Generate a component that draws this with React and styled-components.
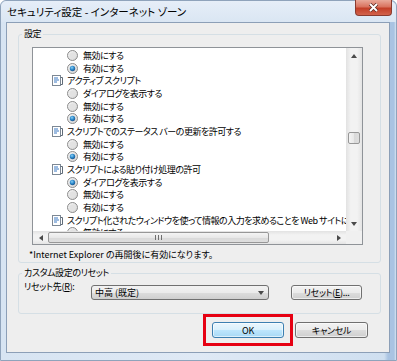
import React from "react";
import styled, { createGlobalStyle } from "styled-components";

const GlobalStyle = createGlobalStyle`
  body {
    margin: 0;
    background: #fff;
    font-family: "Noto Sans CJK JP", "Noto Sans", sans-serif;
    font-feature-settings: "palt";
    color: #000;
  }
`;

const rows = [
  { type: "radio", label: "無効にする" },
  { type: "radio", label: "有効にする", checked: true },
  { type: "cat", label: "アクティブ スクリプト" },
  { type: "radio", label: "ダイアログを表示する" },
  { type: "radio", label: "無効にする" },
  { type: "radio", label: "有効にする", checked: true },
  { type: "cat", label: "スクリプトでのステータス バーの更新を許可する" },
  { type: "radio", label: "無効にする" },
  { type: "radio", label: "有効にする", checked: true },
  { type: "cat", label: "スクリプトによる貼り付け処理の許可" },
  { type: "radio", label: "ダイアログを表示する", checked: true },
  { type: "radio", label: "無効にする" },
  { type: "radio", label: "有効にする" },
  {
    type: "cat",
    label:
      "スクリプト化されたウィンドウを使って情報の入力を求めることを Web サイトに許可する",
  },
  { type: "radio", label: "無効にする" },
];

const Radio = ({ checked }) => (
  <svg width="11" height="11" viewBox="0 0 11 11">
    <defs>
      <linearGradient id="rb" x1="0" y1="0" x2="1" y2="1">
        <stop offset="0" stopColor="#f6f6f6" />
        <stop offset="1" stopColor="#d4d4d4" />
      </linearGradient>
      <radialGradient id="rdot" cx="0.4" cy="0.35" r="0.7">
        <stop offset="0" stopColor="#8fd0f5" />
        <stop offset="0.5" stopColor="#2f8ccd" />
        <stop offset="1" stopColor="#1a4f86" />
      </radialGradient>
    </defs>
    <circle cx="5.5" cy="5.5" r="5" fill="url(#rb)" stroke="#8c8c8c" />
    {checked ? (
      <circle cx="5.5" cy="5.5" r="2.7" fill="url(#rdot)" />
    ) : (
      <circle cx="5.5" cy="5.5" r="3" fill="#e2e2e2" />
    )}
  </svg>
);

const ScriptIcon = () => (
  <svg width="11" height="11" viewBox="0 0 11 11">
    <rect x="0.5" y="0.5" width="8" height="10" fill="#fff" stroke="#7d8894" />
    <path d="M2 3h4M2 5h5M2 7h3" stroke="#3a79c2" strokeWidth="1" />
    <path d="M8.5 2.5h2v7h-2" fill="none" stroke="#5f6b78" />
  </svg>
);

const Arrow = ({ dir }) => {
  const d = {
    up: "M0 4L3 0L6 4Z",
    down: "M0 0L6 0L3 4Z",
    left: "M4 0L4 6L0 3Z",
    right: "M0 0L4 3L0 6Z",
  }[dir];
  const horiz = dir === "left" || dir === "right";
  return (
    <svg width={horiz ? 4 : 6} height={horiz ? 6 : 4} viewBox={horiz ? "0 0 4 6" : "0 0 6 4"}>
      <path d={d} fill="#4a4a4a" />
    </svg>
  );
};

const App = () => (
  <>
    <GlobalStyle />
    <Window>
      <TitleBar>
        <Title>セキュリティ設定 - インターネット ゾーン</Title>
        <CloseButton>
          <svg width="13" height="9" viewBox="0 0 13 9">
            <path d="M3 1L10 8M10 1L3 8" stroke="#5a2a22" strokeWidth="3.4" />
            <path d="M3 1L10 8M10 1L3 8" stroke="#fff" strokeWidth="1.9" />
          </svg>
        </CloseButton>
      </TitleBar>
      <Client>
        <GroupBox>
          <Caption>設定</Caption>
          <ListBox>
            <ListContent>
              {rows.map((r, i) =>
                r.type === "radio" ? (
                  <Row key={i} $indent={34}>
                    <Radio checked={r.checked} />
                    <span>{r.label}</span>
                  </Row>
                ) : (
                  <Row key={i} $indent={19} $gap={4}>
                    <ScriptIcon />
                    <span>{r.label}</span>
                  </Row>
                )
              )}
            </ListContent>
            <VScroll>
              <ArrowBox $h={15}>
                <Arrow dir="up" />
              </ArrowBox>
              <VTrack>
                <Thumb $vertical style={{ marginTop: 69 }} />
              </VTrack>
              <ArrowBox $h={15}>
                <Arrow dir="down" />
              </ArrowBox>
            </VScroll>
            <HScroll>
              <ArrowBox $w={15}>
                <Arrow dir="left" />
              </ArrowBox>
              <Thumb style={{ width: 221 }}>
                <svg width="7" height="5" viewBox="0 0 7 5">
                  <path d="M0.5 0v5M3.5 0v5M6.5 0v5" stroke="#6e6e6e" />
                </svg>
              </Thumb>
              <HTrack />
              <ArrowBox $w={15}>
                <Arrow dir="right" />
              </ArrowBox>
            </HScroll>
            <Corner />
          </ListBox>
          <Note>*Internet Explorer の再開後に有効になります。</Note>
        </GroupBox>
        <ResetGroup>
          <Caption>カスタム設定のリセット</Caption>
          <ResetRow>
            <FieldLabel>
              リセット先(<u>R</u>):
            </FieldLabel>
            <Combo>
              <span>中高 (既定)</span>
              <Arrow dir="down" />
            </Combo>
            <Button $w={71} $ml={22} $inRow>
              リセット(<u>E</u>)...
            </Button>
          </ResetRow>
        </ResetGroup>
        <ButtonBar>
          <Highlight>
            <Button $w={72} $primary>
              OK
            </Button>
          </Highlight>
          <Button $w={73} $ml={2}>
            キャンセル
          </Button>
        </ButtonBar>
      </Client>
    </Window>
  </>
);

const Window = styled.div`
  box-sizing: border-box;
  width: 397px;
  height: 361px;
  display: flex;
  flex-direction: column;
  border: 1px solid #8fa3bb;
  border-radius: 6px 6px 0 0;
  background: linear-gradient(90deg, #d7e4f2 0%, #dfe9f5 50%, #cfdff0 97%, #a9c3e2 98%, #a9c3e2 99.5%, #d7e4f2 100%);
`;

const TitleBar = styled.div`
  height: 21px;
  display: flex;
  align-items: flex-start;
  background: linear-gradient(180deg, #e6eef8 0%, #dae6f3 100%);
  border-radius: 6px 6px 0 0;
`;

const Title = styled.div`
  padding-left: 6px;
  font-size: 10.5px;
  line-height: 21px;
  white-space: nowrap;
`;

const CloseButton = styled.div`
  box-sizing: border-box;
  margin: -1px 4px 0 auto;
  width: 37px;
  height: 16px;
  display: flex;
  align-items: center;
  justify-content: center;
  border: 1px solid #8a3b2f;
  border-top: none;
  border-radius: 0 0 4px 4px;
  background: linear-gradient(180deg, #e9a99a 0%, #d9735f 45%, #c33f28 55%, #d2634c 100%);
`;

const Client = styled.div`
  flex: 1;
  margin: 0 6px 7px 5px;
  padding: 5px 8px 0 11px;
  border: 1px solid #8c9fb7;
  background: #eeeeee;
  display: flex;
  flex-direction: column;
`;

const GroupBox = styled.fieldset`
  margin: 0;
  min-width: 0;
  padding: 7px 0 1px 5px;
  border: 1px solid #d5dfe5;
  border-radius: 3px;
`;

const ResetGroup = styled(GroupBox)`
  margin-top: 4px;
  padding: 2px 0 13px 5px;
`;

const Caption = styled.legend`
  padding: 0 2px;
  margin-left: -2px;
  font-size: 9px;
  line-height: 12px;
  letter-spacing: -0.4px;
  white-space: nowrap;
`;

const ListBox = styled.div`
  box-sizing: border-box;
  width: 331px;
  height: 198px;
  margin-left: 8px;
  border: 1px solid #8f9398;
  background: #fff;
  display: grid;
  grid-template-columns: 1fr 16px;
  grid-template-rows: 1fr 13px;
  overflow: hidden;
`;

const ListContent = styled.div`
  overflow: hidden;
  padding-top: 1px;
`;

const Row = styled.div`
  height: 12.7px;
  display: flex;
  align-items: center;
  gap: ${(p) => p.$gap ?? 5}px;
  padding-left: ${(p) => p.$indent}px;
  font-size: 9px;
  letter-spacing: -0.5px;
  white-space: nowrap;

  svg {
    flex: none;
  }
`;

const VScroll = styled.div`
  display: flex;
  flex-direction: column;
  background: linear-gradient(90deg, #e2e2e2 0%, #f2f2f2 30%, #f2f2f2 70%, #e4e4e4 100%);
`;

const VTrack = styled.div`
  flex: 1;
  display: flex;
  flex-direction: column;
`;

const HScroll = styled.div`
  display: flex;
  align-items: stretch;
  background: linear-gradient(180deg, #e2e2e2 0%, #f2f2f2 30%, #f2f2f2 70%, #e4e4e4 100%);
`;

const HTrack = styled.div`
  flex: 1;
`;

const ArrowBox = styled.div`
  flex: none;
  height: ${(p) => (p.$h ? `${p.$h}px` : "auto")};
  width: ${(p) => (p.$w ? `${p.$w}px` : "auto")};
  display: flex;
  align-items: center;
  justify-content: center;
`;

const Thumb = styled.div`
  box-sizing: border-box;
  flex: none;
  display: flex;
  align-items: center;
  justify-content: center;
  border: 1px solid #979797;
  border-radius: 2px;
  margin: ${(p) => (p.$vertical ? "0 2px" : "1px 0")};
  height: ${(p) => (p.$vertical ? "12px" : "auto")};
  background: ${(p) =>
    p.$vertical
      ? "linear-gradient(90deg, #f4f4f4 0%, #e8e8e8 50%, #d9d9d9 51%, #dedede 100%)"
      : "linear-gradient(180deg, #f4f4f4 0%, #e8e8e8 50%, #d9d9d9 51%, #dedede 100%)"};
`;

const Corner = styled.div`
  background: #f0f0f0;
`;

const Note = styled.div`
  margin: 4px 0 0 5px;
  font-size: 9px;
  line-height: 12px;
  white-space: nowrap;
`;

const ResetRow = styled.div`
  display: flex;
  align-items: flex-start;
`;

const FieldLabel = styled.div`
  width: 67px;
  flex: none;
  font-size: 9px;
  line-height: 12px;
  letter-spacing: -0.3px;
  white-space: nowrap;

  u {
    text-underline-offset: 1px;
  }
`;

const Combo = styled.div`
  box-sizing: border-box;
  margin-top: 4px;
  width: 178px;
  height: 15px;
  display: flex;
  align-items: center;
  justify-content: space-between;
  padding: 0 4px 0 3px;
  border: 1px solid #707070;
  border-radius: 3px;
  font-size: 9px;
  background: linear-gradient(180deg, #f2f2f2 0%, #ebebeb 50%, #dddddd 51%, #cfcfcf 100%);
`;

const Button = styled.div`
  box-sizing: border-box;
  flex: none;
  margin-top: ${(p) => (p.$inRow ? "4px" : "0")};
  margin-left: ${(p) => p.$ml ?? 0}px;
  width: ${(p) => p.$w}px;
  height: ${(p) => (p.$inRow ? "15px" : "16px")};
  display: flex;
  align-items: center;
  justify-content: center;
  border: 1px solid ${(p) => (p.$primary ? "#3c7fb1" : "#707070")};
  border-radius: 3px;
  font-size: 9px;
  letter-spacing: -0.3px;
  white-space: nowrap;
  background: ${(p) =>
    p.$primary
      ? "linear-gradient(180deg, #eaf6fd 0%, #d9f0fc 50%, #bee6fd 51%, #a7d9f5 100%)"
      : "linear-gradient(180deg, #f2f2f2 0%, #ebebeb 50%, #dddddd 51%, #cfcfcf 100%)"};
  box-shadow: inset 0 0 0 1px rgba(255, 255, 255, 0.6);
`;

const ButtonBar = styled.div`
  display: flex;
  justify-content: flex-end;
  align-items: center;
  padding-right: 13px;
`;

const Highlight = styled.div`
  border: 3px solid #e60012;
  padding: 5px 6px;
  display: flex;
`;

export default App;
